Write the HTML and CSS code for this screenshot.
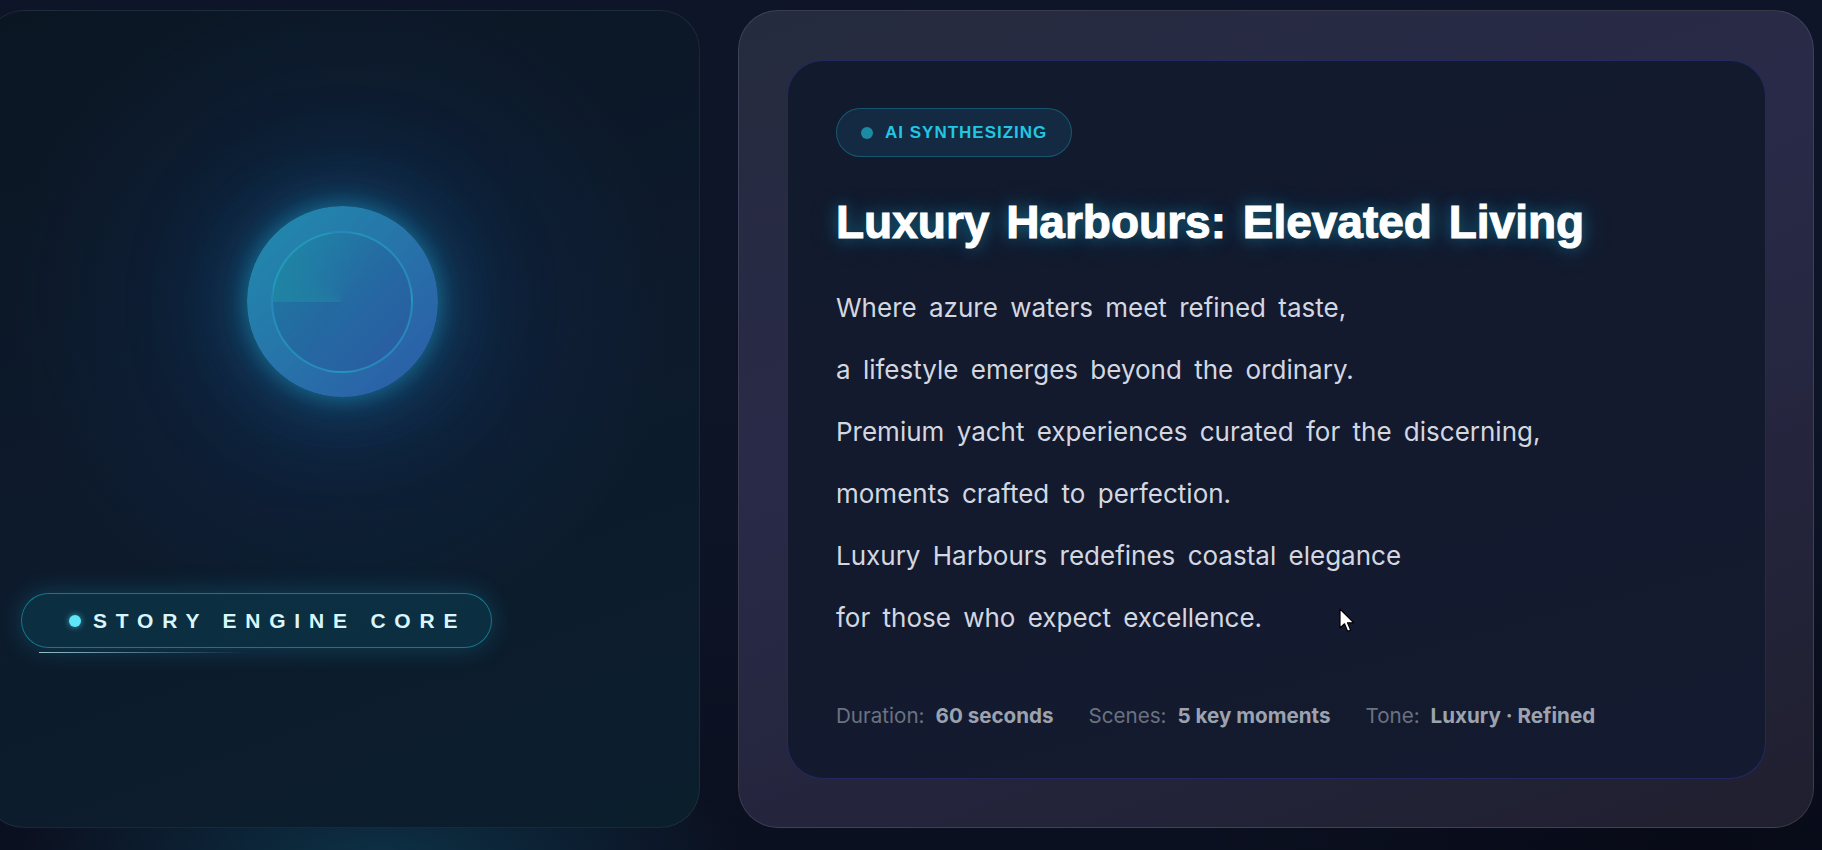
FILE: index.html
```html
<!DOCTYPE html>
<html lang="en">
<head>
<meta charset="utf-8">
<title>Story Engine</title>
<link rel="stylesheet" href="styles.css">
</head>
<body>
<div class="stage">
  <section class="engine">
    <div class="orb">
      <div class="orb-ring"></div>
    </div>
    <div class="core">
      <div class="core-pill">
        <span class="core-dot"></span>
        <span class="core-label">STORY ENGINE CORE</span>
      </div>
      <div class="core-progress"></div>
    </div>
  </section>

  <section class="frame">
    <article class="card">
      <div class="badge"><span class="badge-dot"></span><span class="badge-text">AI SYNTHESIZING</span></div>
      <h1 class="title">Luxury Harbours: Elevated Living</h1>
      <div class="story">
        <p>Where azure waters meet refined taste,</p>
        <p>a lifestyle emerges beyond the ordinary.</p>
        <p>Premium yacht experiences curated for the discerning,</p>
        <p>moments crafted to perfection.</p>
        <p>Luxury Harbours redefines coastal elegance</p>
        <p>for those who expect excellence.</p>
      </div>
      <div class="meta">
        <span class="meta-item"><span class="meta-label">Duration:</span><span class="meta-value">60 seconds</span></span>
        <span class="meta-item"><span class="meta-label">Scenes:</span><span class="meta-value">5 key moments</span></span>
        <span class="meta-item"><span class="meta-label">Tone:</span><span class="meta-value">Luxury · Refined</span></span>
      </div>
    </article>
  </section>

  <svg class="cursor" width="17" height="25" viewBox="0 0 17 25" aria-hidden="true">
    <path d="M1 1 L1 20 L5.5 15.8 L8.6 23.2 L11.6 22 L8.5 14.8 L14.8 14.8 Z" fill="#ffffff" stroke="#000000" stroke-width="1.2" stroke-linejoin="round"/>
  </svg>
</div>
</body>
</html>
```

FILE: styles.css
```css
* { box-sizing: border-box; }

html, body {
  margin: 0;
  padding: 0;
}

body {
  width: 1822px;
  height: 850px;
  overflow: hidden;
  font-family: "Inter", "Liberation Sans", sans-serif;
  background:
    radial-gradient(ellipse 520px 200px at 380px 860px, rgba(16, 110, 140, 0.35), transparent 70%),
    radial-gradient(ellipse 700px 500px at 1700px 850px, rgba(5, 6, 16, 0.6), transparent 70%),
    linear-gradient(180deg, #0e1528 0%, #0d1426 60%, #0b1020 100%);
}

.stage {
  position: relative;
  display: flex;
  gap: 38px;
  height: 850px;
  margin-left: -16px;
  padding: 10px 8px 22px 0;
}

/* ---------- left panel ---------- */
.engine {
  flex: 0 0 716px;
  display: flex;
  flex-direction: column;
  align-items: center;
  padding-top: 195px;
  border: 1px solid rgba(255, 255, 255, 0.07);
  border-radius: 40px;
  background:
    radial-gradient(circle 330px at 358px 292px, rgba(26, 90, 150, 0.34), rgba(20, 64, 118, 0.12) 60%, transparent 100%),
    linear-gradient(160deg, #0b1623 0%, #0d1a2c 50%, #0b1e2c 100%);
}

.orb {
  position: relative;
  width: 191px;
  height: 191px;
  border-radius: 50%;
  display: flex;
  align-items: center;
  justify-content: center;
  background: linear-gradient(135deg, #208cac 0%, #2676aa 45%, #2c5aa7 100%);
  box-shadow:
    0 0 24px rgba(34, 190, 230, 0.45),
    0 0 70px rgba(24, 140, 200, 0.3),
    0 0 140px rgba(24, 100, 180, 0.2);
}

.orb-ring {
  width: 142px;
  height: 142px;
  border-radius: 50%;
  border: 2px solid rgba(40, 175, 210, 0.5);
  background:
    conic-gradient(from 270deg, rgba(24, 170, 160, 0.24) 0deg, rgba(24, 160, 165, 0.12) 50deg, rgba(30, 100, 160, 0) 120deg, rgba(20, 60, 130, 0) 290deg, rgba(20, 60, 130, 0.08) 360deg),
    linear-gradient(135deg, #1f84a6 0%, #2568a2 55%, #2a5ba2 100%);
}

.core {
  align-self: flex-start;
  margin-left: 36px;
  margin-top: 196px;
  display: flex;
  flex-direction: column;
}

.core-pill {
  display: flex;
  align-items: center;
  gap: 12px;
  height: 55px;
  padding: 0 25px 0 47px;
  border: 1px solid rgba(34, 190, 220, 0.5);
  border-radius: 28px;
  background: rgba(10, 80, 100, 0.38);
  box-shadow: 0 0 26px rgba(34, 200, 235, 0.22);
}

.core-dot {
  width: 12px;
  height: 12px;
  border-radius: 50%;
  background: #5ee6f8;
  box-shadow: 0 0 6px rgba(94, 230, 248, 0.6);
}

.core-label {
  font-family: "Liberation Sans", Arial, sans-serif;
  font-weight: 700;
  font-size: 21px;
  letter-spacing: 8.8px;
  color: #d8f6fb;
  line-height: 1;
}

.core-progress {
  width: 210px;
  height: 1px;
  margin: 4px 0 0 18px;
  background: linear-gradient(90deg, rgba(190, 240, 250, 0.75), rgba(160, 230, 245, 0.3) 60%, rgba(160, 230, 245, 0));
}

/* ---------- right panel ---------- */
.frame {
  flex: 1;
  padding: 49px 47px 48px 48px;
  border: 1px solid rgba(255, 255, 255, 0.11);
  border-radius: 40px;
  background: linear-gradient(160deg, #252b3e 0%, #292a48 40%, #23243a 75%, #201f2f 100%);
}

.card {
  height: 100%;
  display: flex;
  flex-direction: column;
  align-items: flex-start;
  padding: 47px 48px;
  border: 1px solid rgba(70, 70, 200, 0.32);
  border-radius: 36px;
  background: linear-gradient(165deg, #121a2d 0%, #131a2e 60%, #141b30 100%);
}

.badge {
  display: flex;
  align-items: center;
  gap: 12px;
  height: 49px;
  padding: 0 24px;
  border: 1px solid rgba(34, 190, 220, 0.3);
  border-radius: 25px;
  background: rgba(26, 110, 150, 0.2);
}

.badge-dot {
  width: 12px;
  height: 12px;
  border-radius: 50%;
  background: #1d8aa3;
}

.badge-text {
  font-family: "Liberation Sans", Arial, sans-serif;
  font-weight: 700;
  font-size: 17px;
  letter-spacing: 1px;
  color: #22c6e4;
}

.title {
  margin: 39px 0 28px;
  font-family: "Liberation Sans", Arial, sans-serif;
  font-weight: 700;
  font-size: 46px;
  line-height: 53px;
  word-spacing: 4px;
  color: #ffffff;
  -webkit-text-stroke: 1.1px #ffffff;
  text-shadow: 0 0 16px rgba(34, 200, 238, 0.45), 0 0 36px rgba(34, 200, 238, 0.2);
}

.story p {
  margin: 0;
  font-size: 26px;
  line-height: 62px;
  word-spacing: 5px;
  color: #d3d7e0;
}

.meta {
  display: flex;
  gap: 35px;
  margin-top: 55px;
  font-size: 20.6px;
  line-height: 23px;
}

.meta-item {
  display: flex;
  gap: 11px;
}

.meta-label {
  color: #6b7280;
}

.meta-value {
  color: #9ca3af;
  font-weight: 700;
}

.cursor {
  position: absolute;
  left: 1355px;
  top: 608px;
}
```
